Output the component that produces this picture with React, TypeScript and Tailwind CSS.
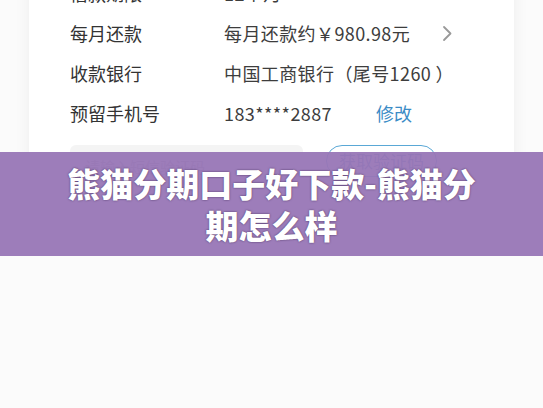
import React from 'react';

const rows = [
  { label: '借款期限', value: '12个月' },
  { label: '每月还款', value: '每月还款约￥980.98元', arrow: true },
  { label: '收款银行', value: '中国工商银行（尾号1260 ）' },
  { label: '预留手机号', value: '183****2887', action: '修改' },
];

const App: React.FC = () => {
  return (
    <div
      className="relative w-[543px] h-[408px] overflow-hidden bg-[#fbfbfb]"
      style={{ fontFamily: '"Noto Sans CJK SC", "Noto Sans", sans-serif' }}
    >
      {/* card */}
      <div className="mx-[29px] -mt-[27px] bg-white rounded-xl shadow-[0_4px_16px_rgba(0,0,0,0.06)] pl-[41px] pr-[61px] pb-[31px]">
        {rows.map((r) => (
          <div key={r.label} className="h-[40px] flex items-center text-[18px] text-[#333]">
            <span className="w-[154px] shrink-0">{r.label}</span>
            <span className="text-[#3d3d3d] tracking-[0.4px]">{r.value}</span>
            {r.action && <span className="ml-[44px] text-[#3b8cc6]">{r.action}</span>}
            {r.arrow && (
              <svg className="ml-auto" width="11" height="17" viewBox="0 0 11 17" fill="none">
                <path d="M2 2l6.5 6.5L2 15" stroke="#999" strokeWidth="1.8" strokeLinecap="round" strokeLinejoin="round" />
              </svg>
            )}
          </div>
        ))}
        <div className="flex items-start mt-[12px]">
          <div className="w-[233px] h-[44px] rounded-md bg-[#f4f4f4] flex items-center pl-[15px] text-[15px] text-[#aaa]">
            请输入短信验证码
          </div>
          <button className="ml-[23px] w-[111px] h-[32px] rounded-full border border-[#5aa8d6] text-[#4a86c0] text-[17px] flex items-center justify-center">
            获取验证码
          </button>
        </div>
      </div>

      {/* title band */}
      <div className="absolute left-0 right-0 top-[152px] h-[104px] bg-[rgba(152,118,182,0.95)] flex items-center justify-center">
        <h1 className="w-[424px] text-center text-white font-black text-[33px] leading-[42px] [text-shadow:0_0_2px_rgba(40,20,60,0.75)]">
          熊猫分期口子好下款-熊猫分期怎么样
        </h1>
      </div>
    </div>
  );
};

export default App;
